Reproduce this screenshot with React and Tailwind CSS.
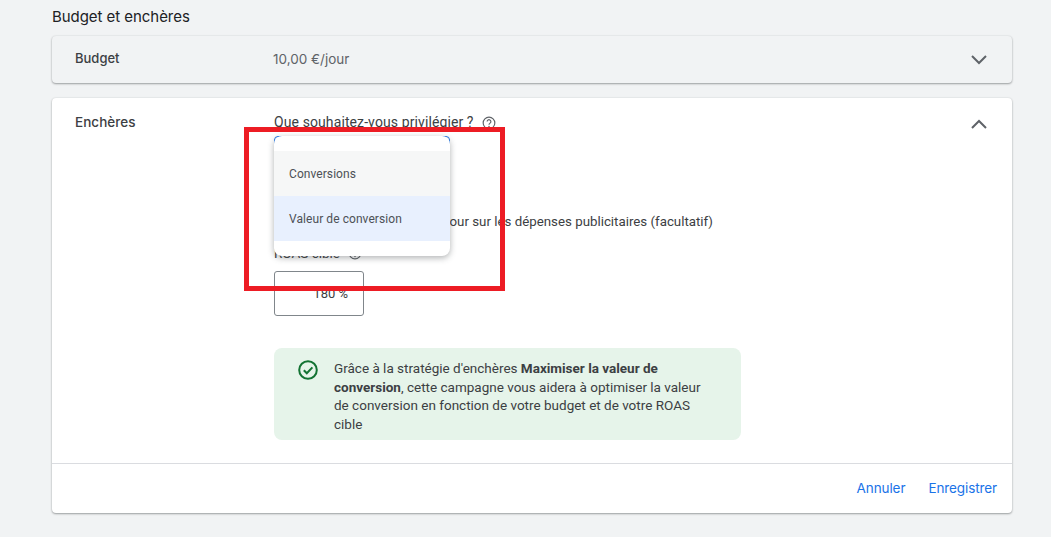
import React from "react";

function Help({ className = "" }) {
  return (
    <svg width="14" height="14" viewBox="0 0 24 24" className={className} fill="none">
      <circle cx="12" cy="12" r="10" stroke="#5f6368" strokeWidth="2" />
      <path d="M8.8 9.6a3.2 3.2 0 1 1 5 2.6c-1.1.8-1.8 1.4-1.8 2.8" stroke="#5f6368" strokeWidth="2" fill="none" />
      <circle cx="12" cy="18" r="1.3" fill="#5f6368" />
    </svg>
  );
}

function Chevron({ up }) {
  return (
    <svg width="16" height="10" viewBox="0 0 16 10" fill="none">
      <path d={up ? "M1 9l7-7 7 7" : "M1 1l7 7 7-7"} stroke="#5f6368" strokeWidth="2" />
    </svg>
  );
}

export default function App() {
  return (
    <div className="relative w-[1051px] h-[537px] overflow-hidden bg-[#f1f3f4] font-['Roboto',sans-serif] text-[#3c4043]">
      <div className="pl-[52px] w-[1012px]">
        <h2 className="h-[36px] pt-[7px] text-[15px] leading-[20px] font-normal text-[#202124] font-['Inter',sans-serif] tracking-[-0.05px]">
          Budget et enchères
        </h2>

        <div className="flex h-[47px] items-center rounded-[4px] bg-[#f1f3f4] shadow-[0_1px_2px_rgba(60,64,67,0.45),0_0_2px_rgba(60,64,67,0.12)] pl-[23px] pr-[25px]">
          <div className="w-[198px] -mt-[2px] text-[13px] font-medium text-[#3c4043] font-['Inter',sans-serif]">Budget</div>
          <div className="flex-1 -mt-[1px] text-[13.5px] text-[#5f6368] font-['Inter',sans-serif]">10,00 €/jour</div>
          <div className="mt-[1px]"><Chevron /></div>
        </div>

        <div className="mt-[15px] h-[415px] flex flex-col rounded-[4px] bg-white shadow-[0_1px_2px_rgba(60,64,67,0.45),0_0_2px_rgba(60,64,67,0.12)]">
          <div className="flex-1 flex pl-[23px] pr-[25px]">
            <div className="w-[199px] pt-[14px] text-[13.5px] leading-[20px] font-medium text-[#3c4043] font-['Inter',sans-serif] tracking-[0.05px]">Enchères</div>
            <div className="flex-1 pt-[15px]">
              <div className="flex items-center h-[18px] text-[14px] tracking-[0.1px] text-[#3c4043]">
                <span>Que souhaitez-vous privilégier ?</span>
                <Help className="ml-[8px] mt-[2px]" />
              </div>
              <div className="mt-[5px] h-[40px] w-[176px] rounded-[4px] border border-[#1a73e8]" />
              <div className="mt-[36px] h-[20px] flex items-center justify-end w-[439px] text-[13.3px] whitespace-nowrap">
                Définir un retour sur les dépenses publicitaires (facultatif)
              </div>
              <div className="mt-[12px] h-[18px] flex items-center text-[13.5px]">
                <span>ROAS cible</span>
                <Help className="ml-[8px]" />
              </div>
              <div className="mt-[9px] flex h-[45px] w-[90px] items-center justify-end rounded-[3px] border border-[#80868b] pr-[15px] text-[13px]">
                180 %
              </div>
              <div className="mt-[32px] flex h-[92px] w-[467px] rounded-[8px] bg-[#e6f4ea] pl-[24px] pr-[30px] pt-[11px]">
                <svg width="20" height="20" viewBox="0 0 20 20" fill="none" className="mt-[1px] shrink-0">
                  <circle cx="10" cy="10" r="8.8" stroke="#137333" strokeWidth="2" />
                  <path d="M5.8 10.2l3 3 5.6-5.8" stroke="#137333" strokeWidth="2" />
                </svg>
                <p className="ml-[16px] text-[13.5px] leading-[18.7px] text-[#3c4043]">
                  Grâce à la stratégie d'enchères <b className="font-bold">Maximiser la valeur de conversion</b>, cette campagne vous aidera à optimiser la valeur de conversion en fonction de votre budget et de votre ROAS cible
                </p>
              </div>
            </div>
            <div className="pt-[21px]"><Chevron up /></div>
          </div>
          <div className="flex h-[50px] items-center justify-end gap-[23px] border-t border-[#dadce0] pr-[15px] text-[13.5px] text-[#1a73e8] font-['Inter',sans-serif] tracking-[-0.1px]">
            <span>Annuler</span>
            <span>Enregistrer</span>
          </div>
        </div>
      </div>

      <div className="absolute left-[274px] top-[136px] w-[176px] h-[120px] rounded-[8px] bg-white py-[15px] shadow-[0_2px_6px_rgba(60,64,67,0.4)] text-[12px] tracking-[0.07px] text-[#4d5156]">
        <div className="flex h-[45px] items-center bg-[#f6f7f7] px-[15px]">Conversions</div>
        <div className="flex h-[45px] items-center bg-[#e8f0fe] px-[15px]">Valeur de conversion</div>
      </div>

      <div className="absolute left-[244px] top-[127px] w-[261px] h-[164px] border-[5px] border-[#ed1c24]" />
    </div>
  );
}
